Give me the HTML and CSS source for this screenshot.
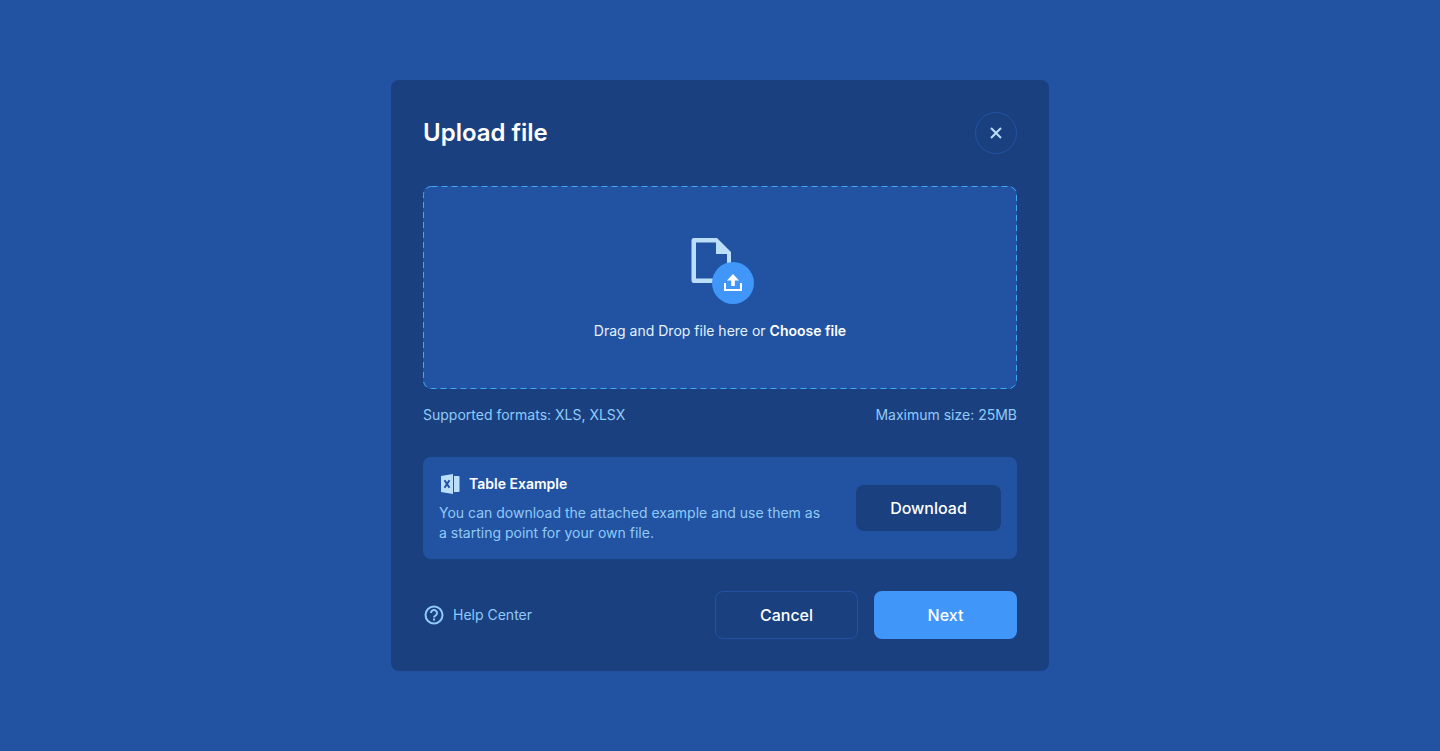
FILE: index.html
```html
<!DOCTYPE html>
<html lang="en">
<head>
<meta charset="utf-8">
<meta name="viewport" content="width=device-width, initial-scale=1">
<title>Upload file</title>
<link rel="stylesheet" href="styles.css">
</head>
<body>
<main class="dialog" role="dialog" aria-labelledby="dialog-title">
  <header class="dialog-header">
    <h1 class="dialog-title" id="dialog-title">Upload file</h1>
    <button class="close" type="button" aria-label="Close">
      <svg width="12" height="12" viewBox="0 0 12 12" fill="none" stroke="currentColor" stroke-width="2"><path d="M1 1l10 10M11 1L1 11"/></svg>
    </button>
  </header>

  <section class="dropzone">
    <svg class="dropzone-outline" aria-hidden="true"><rect class="dropzone-dash" x="0.5" y="0.5" rx="8"/></svg>
    <svg class="dropzone-icon" width="68" height="68" viewBox="0 0 68 68" aria-hidden="true">
      <path fill="#bbdefb" fill-rule="evenodd" d="M8 2h23l14 14v31H8a2.500 2.500 0 0 1-2.500-2.500v-40A2.500 2.500 0 0 1 8 2zm2 4.500v36h31V18H30V6.500z"/>
      <circle cx="47" cy="47" r="21" fill="#4196fa"/>
      <path fill="#fff" d="M47 38l6 6.500h-4.200V50h-3.600v-5.500H41z"/>
      <path fill="none" stroke="#fff" stroke-width="2" d="M39 47v7h16v-7"/>
    </svg>
    <p class="dropzone-text">Drag and Drop file here or <button class="choose" type="button">Choose file</button></p>
  </section>

  <div class="limits">
    <span>Supported formats: XLS, XLSX</span>
    <span>Maximum size: 25MB</span>
  </div>

  <section class="example">
    <div class="example-info">
      <h2 class="example-title">
        <svg width="22" height="22" viewBox="0 0 22 22" aria-hidden="true">
          <path fill="#bbdefb" d="M2 3l12-2v20L2 19z"/>
          <path fill="#bbdefb" d="M15 3h4.500a1 1 0 0 1 1 1v14a1 1 0 0 1-1 1H15z"/>
          <path fill="none" stroke="#2253a2" stroke-width="2" d="M5.500 7.200l5 7.600M10.500 7.200l-5 7.600"/>
        </svg>
        Table Example
      </h2>
      <p class="example-text">You can download the attached example and use them as a starting point for your own file.</p>
    </div>
    <button class="button button-dark" type="button">Download</button>
  </section>

  <footer class="dialog-footer">
    <a class="help" href="#help">
      <svg width="22" height="22" viewBox="0 0 22 22" fill="none" stroke="currentColor" stroke-width="2" aria-hidden="true">
        <circle cx="11" cy="11" r="8.500"/>
        <path d="M8 9a3 3 0 1 1 4.600 2.500C11.500 12.200 11 12.700 11 13.500"/>
        <path d="M11 14.500v2"/>
      </svg>
      Help Center
    </a>
    <div class="actions">
      <button class="button button-outline" type="button">Cancel</button>
      <button class="button button-primary" type="button">Next</button>
    </div>
  </footer>
</main>
</body>
</html>
```
FILE: styles.css
```css
* {
  box-sizing: border-box;
}

body {
  margin: 0;
  min-height: 100vh;
  padding: 16px;
  display: flex;
  align-items: center;
  justify-content: center;
  background: #2253a2;
  color: #fff;
  font-family: Inter, "Liberation Sans", sans-serif;
  font-size: 14px;
  line-height: 20px;
}

h1,
h2,
p {
  margin: 0;
}

button {
  font: inherit;
  color: inherit;
  cursor: pointer;
}

.dialog {
  width: 100%;
  max-width: 658px;
  padding: 32px;
  border-radius: 8px;
  background: #1a4080;
}

.dialog-header {
  display: flex;
  align-items: center;
  justify-content: space-between;
  margin-bottom: 32px;
}

.dialog-title {
  font-size: 24px;
  line-height: 32px;
  font-weight: 600;
}

.close {
  display: grid;
  place-items: center;
  width: 42px;
  height: 42px;
  padding: 0;
  border: 1px solid #2253a2;
  border-radius: 50%;
  background: none;
  color: #bbdefb;
}

.dropzone {
  position: relative;
  display: flex;
  flex-direction: column;
  align-items: center;
  gap: 17px;
  padding: 50px 16px 48px;
  border-radius: 8px;
  background: #2253a2;
}

.dropzone-outline {
  position: absolute;
  inset: 0;
  width: 100%;
  height: 100%;
  pointer-events: none;
}

.dropzone-dash {
  width: calc(100% - 1px);
  height: calc(100% - 1px);
  fill: none;
  stroke: #42a5f5;
  stroke-dasharray: 6 4;
}

.dropzone-text {
  color: #e3f2fd;
}

.choose {
  padding: 0;
  border: 0;
  background: none;
  color: #fff;
  font-weight: 600;
}

.limits {
  display: flex;
  justify-content: space-between;
  gap: 16px;
  margin: 16px 0 32px;
  color: #90caf9;
}

.example {
  display: flex;
  align-items: center;
  justify-content: space-between;
  gap: 32px;
  padding: 16px;
  border-radius: 8px;
  background: #2253a2;
}

.example-info {
  flex: 1;
}

.example-title {
  display: flex;
  align-items: center;
  gap: 8px;
  margin-bottom: 8px;
  font-size: 14px;
  font-weight: 600;
}

.example-text {
  color: #90caf9;
}

.button {
  min-width: 143px;
  height: 48px;
  padding: 0 32px;
  border: 0;
  border-radius: 8px;
  font-size: 16px;
  font-weight: 500;
}

.button-dark {
  min-width: 145px;
  height: 46px;
  background: #1a4080;
}

.button-outline {
  border: 1px solid #2253a2;
  background: none;
}

.button-primary {
  background: #4196fa;
}

.dialog-footer {
  display: flex;
  align-items: center;
  justify-content: space-between;
  gap: 16px;
  margin-top: 32px;
}

.help {
  display: flex;
  align-items: center;
  gap: 8px;
  color: #90caf9;
  text-decoration: none;
}

.actions {
  display: flex;
  gap: 16px;
}
```
